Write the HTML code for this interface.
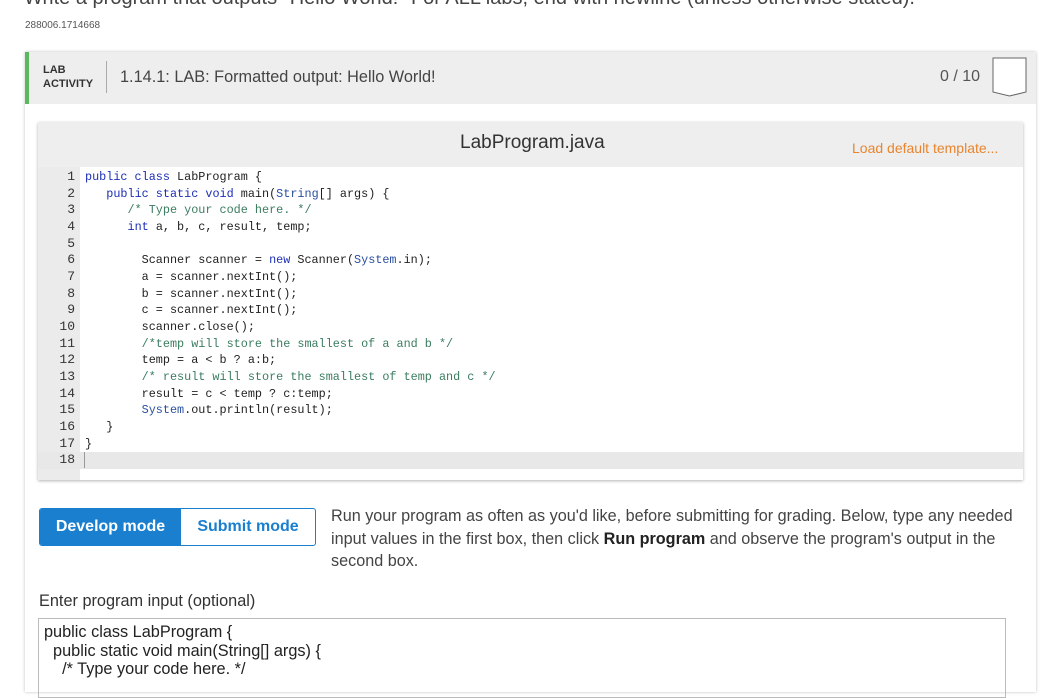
<!DOCTYPE html>
<html><head><meta charset="utf-8"><style>
body{margin:0;width:1040px;height:680px;overflow:hidden;background:#fff;font-family:"Liberation Sans",sans-serif;color:#333;position:relative}
.a{position:absolute}
.code{font-family:"Liberation Mono",monospace;font-size:11.8px;line-height:16.65px;white-space:pre;color:#222}
.k{color:#1d2fb5}.c{color:#3b7d5f}.v{color:#2a4fa0}
</style></head><body>
<div class="a" style="top:-13px;left:24px;font-size:20px;color:#444;white-space:nowrap">Write a program that outputs "Hello World!" For ALL labs, end with newline (unless otherwise stated).</div>
<div class="a" style="top:20px;left:25px;font-size:10px;color:#555">288006.1714668</div>
<div class="a" style="top:52px;left:25px;width:1011px;height:640px;box-shadow:0 0 3px rgba(0,0,0,.25)"></div>
<div class="a" style="top:52px;left:25px;width:1011px;height:52px;background:#eee;border-left:4px solid #5cb85c;box-sizing:border-box"></div>
<div class="a" style="top:63px;left:43px;font-size:11px;font-weight:bold;line-height:14px;color:#333">LAB<br>ACTIVITY</div>
<div class="a" style="top:61px;left:106px;width:1px;height:32px;background:#aaa"></div>
<div class="a" style="top:68px;left:120px;font-size:16.3px;color:#444">1.14.1: LAB: Formatted output: Hello World!</div>
<div class="a" style="top:68px;left:940px;font-size:16px;color:#555">0 / 10</div>
<svg class="a" style="top:56px;left:991px" width="38" height="42"><path d="M2 2H35V36L18.5 40L2 36Z" fill="#fff" stroke="#666" stroke-width="1"/></svg>
<div class="a" style="top:122px;left:38px;width:985px;height:358px;background:#fff;box-shadow:0 1px 3px rgba(0,0,0,.3)"></div>
<div class="a" style="top:122px;left:38px;width:985px;height:45px;background:#eee"></div>
<div class="a" style="top:132px;left:460px;font-size:19px;color:#333">LabProgram.java</div>
<div class="a" style="top:140px;left:852px;font-size:14px;color:#e8852e">Load default template...</div>
<div class="a" style="top:167px;left:38px;width:42px;height:313px;background:#ebebeb"></div>
<div class="a" style="top:452px;left:38px;width:985px;height:17px;background:#e8e8e8"></div>
<div class="a" style="top:452px;left:84px;width:1px;height:16px;background:#999"></div>
<div class="a code" style="top:169px;left:38px;width:37px;text-align:right;color:#333;font-size:13px">1
2
3
4
5
6
7
8
9
10
11
12
13
14
15
16
17
18</div>
<div class="a code" style="top:169px;left:85px"><span class="k">public class</span> LabProgram {
   <span class="k">public static void</span> main(<span class="v">String</span>[] args) {
      <span class="c">/* Type your code here. */</span>
      <span class="k">int</span> a, b, c, result, temp;

        Scanner scanner = <span class="k">new</span> Scanner(<span class="v">System</span>.in);
        a = scanner.nextInt();
        b = scanner.nextInt();
        c = scanner.nextInt();
        scanner.close();
        <span class="c">/*temp will store the smallest of a and b */</span>
        temp = a &lt; b ? a:b;
        <span class="c">/* result will store the smallest of temp and c */</span>
        result = c &lt; temp ? c:temp;
        <span class="v">System</span>.out.println(result);
   }
}
</div>
<div class="a" style="top:508px;left:39px;width:275px;height:36px;border:1px solid #1a7fcf;border-radius:3px;overflow:hidden;display:flex;font-weight:bold;font-size:16px">
<div style="width:141px;background:#1a7fcf;color:#fff;text-align:center;line-height:36px">Develop mode</div>
<div style="flex:1;color:#1a7fcf;text-align:center;line-height:36px">Submit mode</div></div>
<div class="a" style="top:505px;left:331px;width:700px;font-size:16.2px;line-height:22.5px;color:#444">Run your program as often as you'd like, before submitting for grading. Below, type any needed input values in the first box, then click <b style="color:#222">Run program</b> and observe the program's output in the second box.</div>
<div class="a" style="top:592px;left:39px;font-size:16.3px;color:#333">Enter program input (optional)</div>
<div class="a" style="top:618px;left:38px;width:968px;height:80px;box-sizing:border-box;border:1px solid #bbb;font-size:16.3px;line-height:18.5px;color:#222;padding:4px 5px;white-space:pre">public class LabProgram {
  public static void main(String[] args) {
    /* Type your code here. */</div>
</body></html>
